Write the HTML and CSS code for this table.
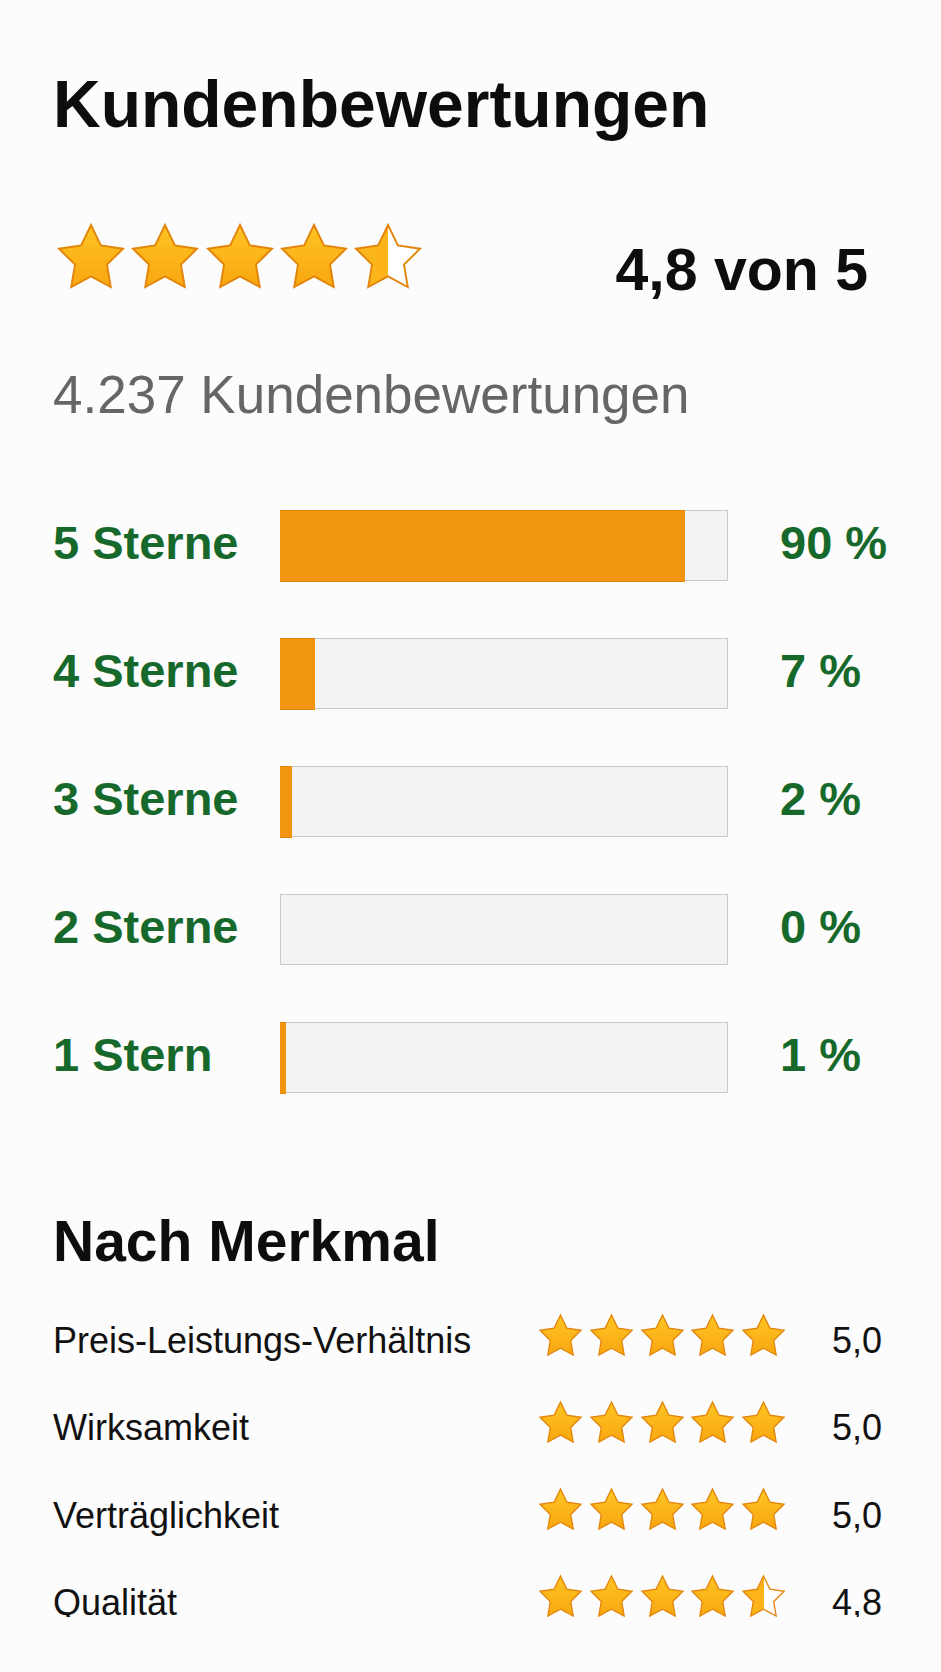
FILE: index.html
```html
<!DOCTYPE html>
<html lang="de">
<head>
<meta charset="utf-8">
<title>Kundenbewertungen</title>
<link rel="stylesheet" href="styles.css">
</head>
<body>
<svg class="defs" width="0" height="0" aria-hidden="true">
  <defs>
    <linearGradient id="gf" x1="0" y1="0" x2="0" y2="1">
      <stop offset="0" stop-color="#ffc424"/>
      <stop offset="1" stop-color="#f8a710"/>
    </linearGradient>
    <linearGradient id="gh" x1="0" y1="0" x2="1" y2="0">
      <stop offset="0" stop-color="#fcb81c"/>
      <stop offset="0.5" stop-color="#fcb31a"/>
      <stop offset="0.5" stop-color="#ffffff"/>
      <stop offset="1" stop-color="#ffffff"/>
    </linearGradient>
    <path id="s" d="M12 2 L15.09 8.26 L22 9.27 L17 14.14 L18.18 21.02 L12 17.77 L5.82 21.02 L7 14.14 L2 9.27 L8.91 8.26 Z"/>
  </defs>
</svg>
<main class="page">
  <h1 class="title">Kundenbewertungen</h1>

  <div class="summary">
    <div class="stars stars-lg">
      <svg class="star" viewBox="2 2 20 19.02" preserveAspectRatio="none"><use href="#s" fill="url(#gf)"/></svg>
      <svg class="star" viewBox="2 2 20 19.02" preserveAspectRatio="none"><use href="#s" fill="url(#gf)"/></svg>
      <svg class="star" viewBox="2 2 20 19.02" preserveAspectRatio="none"><use href="#s" fill="url(#gf)"/></svg>
      <svg class="star" viewBox="2 2 20 19.02" preserveAspectRatio="none"><use href="#s" fill="url(#gf)"/></svg>
      <svg class="star" viewBox="2 2 20 19.02" preserveAspectRatio="none"><use href="#s" fill="url(#gh)"/></svg>
    </div>
    <div class="score">4,8 von 5</div>
  </div>

  <p class="count">4.237 Kundenbewertungen</p>

  <ul class="dist">
    <li class="dist-row">
      <span class="dist-label">5 Sterne</span>
      <span class="bar"><span class="fill" style="width:91%"></span></span>
      <span class="dist-pct">90 %</span>
    </li>
    <li class="dist-row">
      <span class="dist-label">4 Sterne</span>
      <span class="bar"><span class="fill" style="width:8%"></span></span>
      <span class="dist-pct">7 %</span>
    </li>
    <li class="dist-row">
      <span class="dist-label">3 Sterne</span>
      <span class="bar"><span class="fill" style="width:2.9%"></span></span>
      <span class="dist-pct">2 %</span>
    </li>
    <li class="dist-row">
      <span class="dist-label">2 Sterne</span>
      <span class="bar"><span class="fill" style="width:0%"></span></span>
      <span class="dist-pct">0 %</span>
    </li>
    <li class="dist-row">
      <span class="dist-label">1 Stern</span>
      <span class="bar"><span class="fill" style="width:1.4%"></span></span>
      <span class="dist-pct">1 %</span>
    </li>
  </ul>

  <h2 class="subtitle">Nach Merkmal</h2>

  <ul class="features">
    <li class="feat-row">
      <span class="feat-label">Preis-Leistungs-Verhältnis</span>
      <span class="stars stars-sm">
        <svg class="star" viewBox="2 2 20 19.02" preserveAspectRatio="none"><use href="#s" fill="url(#gf)"/></svg>
        <svg class="star" viewBox="2 2 20 19.02" preserveAspectRatio="none"><use href="#s" fill="url(#gf)"/></svg>
        <svg class="star" viewBox="2 2 20 19.02" preserveAspectRatio="none"><use href="#s" fill="url(#gf)"/></svg>
        <svg class="star" viewBox="2 2 20 19.02" preserveAspectRatio="none"><use href="#s" fill="url(#gf)"/></svg>
        <svg class="star" viewBox="2 2 20 19.02" preserveAspectRatio="none"><use href="#s" fill="url(#gf)"/></svg>
      </span>
      <span class="feat-value">5,0</span>
    </li>
    <li class="feat-row">
      <span class="feat-label">Wirksamkeit</span>
      <span class="stars stars-sm">
        <svg class="star" viewBox="2 2 20 19.02" preserveAspectRatio="none"><use href="#s" fill="url(#gf)"/></svg>
        <svg class="star" viewBox="2 2 20 19.02" preserveAspectRatio="none"><use href="#s" fill="url(#gf)"/></svg>
        <svg class="star" viewBox="2 2 20 19.02" preserveAspectRatio="none"><use href="#s" fill="url(#gf)"/></svg>
        <svg class="star" viewBox="2 2 20 19.02" preserveAspectRatio="none"><use href="#s" fill="url(#gf)"/></svg>
        <svg class="star" viewBox="2 2 20 19.02" preserveAspectRatio="none"><use href="#s" fill="url(#gf)"/></svg>
      </span>
      <span class="feat-value">5,0</span>
    </li>
    <li class="feat-row">
      <span class="feat-label">Verträglichkeit</span>
      <span class="stars stars-sm">
        <svg class="star" viewBox="2 2 20 19.02" preserveAspectRatio="none"><use href="#s" fill="url(#gf)"/></svg>
        <svg class="star" viewBox="2 2 20 19.02" preserveAspectRatio="none"><use href="#s" fill="url(#gf)"/></svg>
        <svg class="star" viewBox="2 2 20 19.02" preserveAspectRatio="none"><use href="#s" fill="url(#gf)"/></svg>
        <svg class="star" viewBox="2 2 20 19.02" preserveAspectRatio="none"><use href="#s" fill="url(#gf)"/></svg>
        <svg class="star" viewBox="2 2 20 19.02" preserveAspectRatio="none"><use href="#s" fill="url(#gf)"/></svg>
      </span>
      <span class="feat-value">5,0</span>
    </li>
    <li class="feat-row">
      <span class="feat-label">Qualität</span>
      <span class="stars stars-sm">
        <svg class="star" viewBox="2 2 20 19.02" preserveAspectRatio="none"><use href="#s" fill="url(#gf)"/></svg>
        <svg class="star" viewBox="2 2 20 19.02" preserveAspectRatio="none"><use href="#s" fill="url(#gf)"/></svg>
        <svg class="star" viewBox="2 2 20 19.02" preserveAspectRatio="none"><use href="#s" fill="url(#gf)"/></svg>
        <svg class="star" viewBox="2 2 20 19.02" preserveAspectRatio="none"><use href="#s" fill="url(#gf)"/></svg>
        <svg class="star" viewBox="2 2 20 19.02" preserveAspectRatio="none"><use href="#s" fill="url(#gh)"/></svg>
      </span>
      <span class="feat-value">4,8</span>
    </li>
  </ul>
</main>
</body>
</html>
```
FILE: styles.css
```css
html, body {
  margin: 0;
  padding: 0;
  background: #fcfcfc;
}

body {
  font-family: "Liberation Sans", Arial, sans-serif;
  color: #111111;
}

.defs {
  display: block;
  width: 0;
  height: 0;
  overflow: hidden;
}

.page {
  padding: 71px 53px 0 53px;
}

.title {
  margin: 0;
  font-size: 66px;
  line-height: 66px;
  font-weight: 700;
  color: #0d0d0d;
}

.summary {
  margin-top: 88px;
  display: flex;
  justify-content: space-between;
  align-items: flex-start;
}

.stars {
  display: flex;
}

.star {
  display: block;
  overflow: visible;
  stroke: #e3850a;
  stroke-linejoin: miter;
}

.stars-lg {
  margin-left: 6px;
  gap: 10.3px;
}

.stars-lg .star {
  width: 64px;
  height: 62px;
  stroke-width: 0.6;
}

.score {
  margin-top: 16px;
  margin-right: 20px;
  font-size: 59px;
  line-height: 59px;
  font-weight: 700;
  color: #0d0d0d;
}

.count {
  margin: 69px 0 0 0;
  font-size: 53px;
  line-height: 52px;
  color: #666666;
}

.dist {
  list-style: none;
  margin: 89px 0 0 0;
  padding: 0;
  display: flex;
  flex-direction: column;
  gap: 57px;
}

.dist-row {
  display: flex;
  align-items: center;
  height: 71px;
}

.dist-label,
.dist-pct {
  font-size: 47px;
  line-height: 47px;
  font-weight: 700;
  color: #17692b;
  padding-bottom: 6px;
}

.dist-label {
  width: 227px;
  flex: none;
}

.dist-pct {
  margin-left: 52px;
}

.bar {
  box-sizing: border-box;
  width: 448px;
  height: 71px;
  flex: none;
  display: flex;
  border: 1.5px solid #c9c9c9;
  background: #f3f3f3;
}

.fill {
  align-self: stretch;
  margin: -1.5px 0 -1.5px -1.5px;
  background: #f0950d;
  box-shadow: inset 0 1px 0 #e5880a, inset 0 -1px 0 #e5880a;
}

.subtitle {
  margin: 120px 0 0 0;
  font-size: 57px;
  line-height: 57px;
  font-weight: 700;
  color: #0d0d0d;
}

.features {
  list-style: none;
  margin: 44px 0 0 0;
  padding: 0;
  display: flex;
  flex-direction: column;
  gap: 46.3px;
}

.feat-row {
  display: flex;
  align-items: center;
  height: 41px;
}

.feat-label,
.feat-value {
  font-size: 36px;
  line-height: 36px;
  color: #111111;
  padding-top: 13px;
}

.feat-label {
  flex: 1;
}

.stars-sm {
  gap: 9.7px;
  margin-right: 8px;
}

.stars-sm .star {
  width: 41px;
  height: 40px;
  stroke-width: 0.65;
}

.feat-value {
  width: 90px;
  margin-right: 6px;
  text-align: right;
}
```
